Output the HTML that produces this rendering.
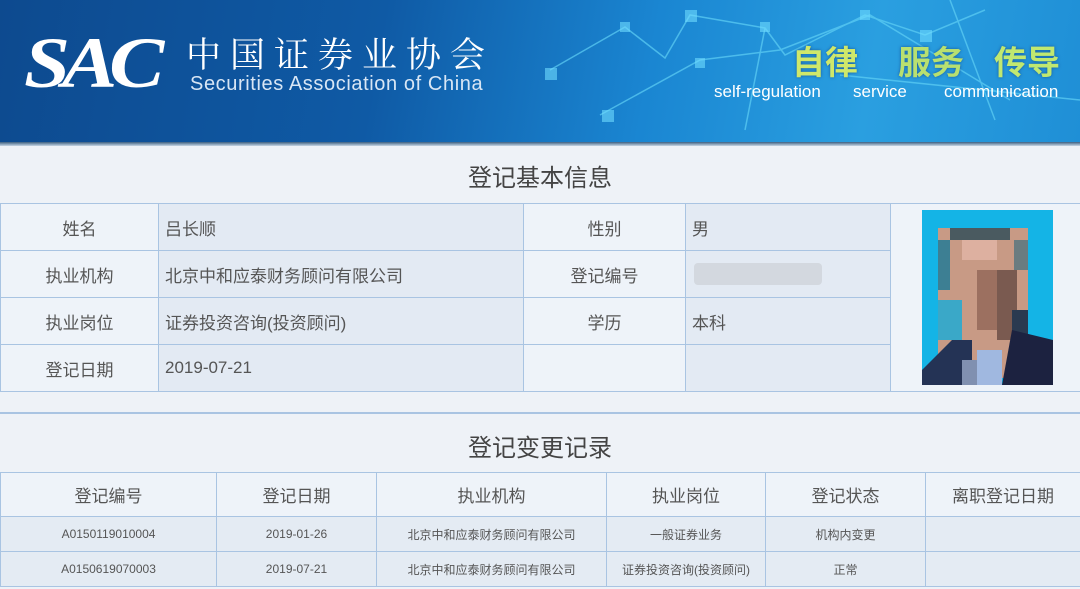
<!DOCTYPE html>
<html><head><meta charset="utf-8"><style>
*{margin:0;padding:0;box-sizing:border-box}
body{width:1080px;height:589px;overflow:hidden;background:#eef2f7;font-family:"Liberation Sans","Noto Sans CJK SC",sans-serif;color:#444;position:relative}
.hdr{position:absolute;left:0;top:0;width:1080px;height:142px;background:linear-gradient(100deg,#0d4a8f 0%,#0f5aa5 35%,#1a86d2 60%,#2a9fe0 80%,#1f8fd6 100%);overflow:hidden}
.hb{position:absolute;left:0;top:142px;width:1080px;height:4px;background:linear-gradient(#3c5f80,#c7d6e4)}
.abs{position:absolute}
table{border-collapse:collapse;position:absolute;left:0;table-layout:fixed}
td{border:1px solid #a9c4e2;font-size:17px;color:#555;height:47px;vertical-align:middle}
.l{background:#eef3f9;text-align:center}
.v{background:#e3eaf3;padding-left:6px}
.t2 td{font-size:12px;text-align:center;height:35px;background:#e4ebf3}
.t2 tr.h td{font-size:17px;height:44px;background:#eef3f9}
.title{position:absolute;left:0;width:1080px;text-align:center;font-size:24px;color:#444}
</style></head><body>
<div class="hdr">
<svg class="abs" style="left:540px;top:0" width="540" height="142">
<g stroke="#5fd0f5" stroke-width="1.5" opacity=".7" fill="none">
<polyline points="10,70 85,27 125,58 150,15 225,28 245,55 275,40 325,15 385,35 445,10"/>
<polyline points="60,115 160,60 240,50 330,15 470,100"/>
<line x1="225" y1="28" x2="205" y2="130"/>
<line x1="410" y1="0" x2="455" y2="120"/>
<line x1="300" y1="75" x2="540" y2="100"/>
</g>
<g fill="#6fdcff" opacity=".6"><rect x="5" y="68" width="12" height="12"/><rect x="80" y="22" width="10" height="10"/><rect x="145" y="10" width="12" height="12"/><rect x="220" y="22" width="10" height="10"/><rect x="155" y="58" width="10" height="10"/><rect x="62" y="110" width="12" height="12"/><rect x="320" y="10" width="10" height="10"/><rect x="380" y="30" width="12" height="12"/></g>
</svg>
<div class="abs" style="left:24px;top:22px;font-family:'Liberation Serif',serif;font-style:italic;font-weight:bold;font-size:72px;color:#fff;letter-spacing:-7px;transform:scaleX(1.15);transform-origin:left">SAC</div>
<div class="abs" style="left:186px;top:28px;font-size:35px;color:#fff;letter-spacing:9px;font-family:'Noto Serif CJK SC','Noto Sans CJK SC',serif">中国证券业协会</div>
<div class="abs" style="left:190px;top:73px;font-size:20px;color:#d8e6f5;letter-spacing:.6px">Securities Association of China</div>
<div class="abs" style="left:792px;top:36px;font-size:33px;font-weight:bold;color:#cfe86a;text-shadow:0 0 3px #1a5a9a">自律</div>
<div class="abs" style="left:898px;top:36px;font-size:33px;font-weight:bold;color:#b8e070;text-shadow:0 0 3px #1a5a9a">服务</div>
<div class="abs" style="left:994px;top:36px;font-size:33px;font-weight:bold;color:#c0e870;text-shadow:0 0 3px #1a5a9a">传导</div>
<div class="abs" style="left:714px;top:82px;font-size:17px;color:#fff">self-regulation</div>
<div class="abs" style="left:853px;top:82px;font-size:17px;color:#fff">service</div>
<div class="abs" style="left:944px;top:82px;font-size:17px;color:#fff">communication</div>
</div>
<div class="hb"></div>
<div class="title" style="top:158px">登记基本信息</div>
<table style="top:203px;width:1080px">
<colgroup><col style="width:158px"><col style="width:365px"><col style="width:162px"><col style="width:205px"><col style="width:190px"></colgroup>
<tr><td class="l">姓名</td><td class="v">吕长顺</td><td class="l">性别</td><td class="v">男</td><td class="l" rowspan="4"></td></tr>
<tr><td class="l">执业机构</td><td class="v">北京中和应泰财务顾问有限公司</td><td class="l">登记编号</td><td class="v"><div style="width:128px;height:22px;background:#d3d8df;border-radius:4px;margin-left:2px"></div></td></tr>
<tr><td class="l">执业岗位</td><td class="v">证券投资咨询(投资顾问)</td><td class="l">学历</td><td class="v">本科</td></tr>
<tr><td class="l">登记日期</td><td class="v">2019-07-21</td><td class="l"></td><td class="v"></td></tr>
</table>
<svg class="abs" style="left:922px;top:210px" width="131" height="175">
<rect width="131" height="175" fill="#14b4e6"/>
<rect x="16" y="18" width="90" height="150" fill="#c89a85"/>
<rect x="28" y="18" width="60" height="12" fill="#4a5a60"/>
<rect x="16" y="30" width="12" height="50" fill="#3d7f93"/>
<rect x="92" y="30" width="14" height="30" fill="#6a7c80"/>
<rect x="40" y="30" width="35" height="20" fill="#ddb0a0"/>
<rect x="55" y="60" width="20" height="60" fill="#9c7060"/>
<rect x="75" y="60" width="20" height="70" fill="#7a5a50"/>
<rect x="16" y="90" width="24" height="40" fill="#3aa8c8"/>
<rect x="90" y="100" width="16" height="40" fill="#2a3a50"/>
<path d="M0 175 L0 160 L30 130 L50 130 L50 175Z" fill="#243355"/>
<path d="M131 175 L131 130 L90 120 L80 175Z" fill="#1c2240"/>
<rect x="55" y="140" width="25" height="35" fill="#a0b8e0"/>
<rect x="40" y="150" width="15" height="25" fill="#8090b0"/>
</svg>
<div class="abs" style="left:0;top:412px;width:1080px;height:2px;background:#a9c4e2"></div>
<div class="title" style="top:428px">登记变更记录</div>
<table class="t2" style="top:472px;width:1080px">
<colgroup><col style="width:216px"><col style="width:160px"><col style="width:230px"><col style="width:159px"><col style="width:160px"><col style="width:155px"></colgroup>
<tr class="h"><td>登记编号</td><td>登记日期</td><td>执业机构</td><td>执业岗位</td><td>登记状态</td><td>离职登记日期</td></tr>
<tr><td>A0150119010004</td><td>2019-01-26</td><td>北京中和应泰财务顾问有限公司</td><td>一般证券业务</td><td>机构内变更</td><td></td></tr>
<tr><td>A0150619070003</td><td>2019-07-21</td><td>北京中和应泰财务顾问有限公司</td><td>证券投资咨询(投资顾问)</td><td>正常</td><td></td></tr>
</table>
</body></html>
